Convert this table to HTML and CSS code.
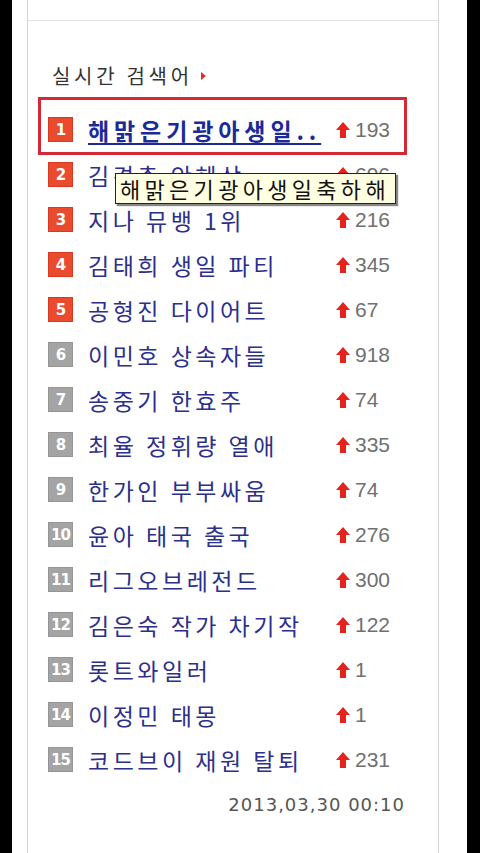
FILE: index.html
```html
<html>
  <head>
    <link rel="stylesheet" href="styles.css">
  </head>
  <body>
    <div class="screen">
      <div class="col">
        <div class="top"></div>
        <div class="rank">
          <h3 class="title">실시간 검색어</h3>
          <ol class="list">
            <li class="item first">
              <span class="hl"></span>
              <span class="num hot">1</span>
              <a class="word" href="javascript:;">해맑은기광아생일..</a>
              <span class="up"><svg viewBox="0 0 14 16" width="14" height="16"><path d="M7 0 L14 8 L10 8 L10 16 L4 16 L4 8 L0 8 Z"/></svg>193</span>
              <span class="tip">해맑은기광아생일축하해</span>
            </li>
            <li class="item"><span class="num hot">2</span><span class="word">김경춘 안혜상</span><span class="up"><svg viewBox="0 0 14 16" width="14" height="16"><path d="M7 0 L14 8 L10 8 L10 16 L4 16 L4 8 L0 8 Z"/></svg>696</span></li>
            <li class="item"><span class="num hot">3</span><span class="word">지나 뮤뱅 1위</span><span class="up"><svg viewBox="0 0 14 16" width="14" height="16"><path d="M7 0 L14 8 L10 8 L10 16 L4 16 L4 8 L0 8 Z"/></svg>216</span></li>
            <li class="item"><span class="num hot">4</span><span class="word">김태희 생일 파티</span><span class="up"><svg viewBox="0 0 14 16" width="14" height="16"><path d="M7 0 L14 8 L10 8 L10 16 L4 16 L4 8 L0 8 Z"/></svg>345</span></li>
            <li class="item"><span class="num hot">5</span><span class="word">공형진 다이어트</span><span class="up"><svg viewBox="0 0 14 16" width="14" height="16"><path d="M7 0 L14 8 L10 8 L10 16 L4 16 L4 8 L0 8 Z"/></svg>67</span></li>
            <li class="item"><span class="num">6</span><span class="word">이민호 상속자들</span><span class="up"><svg viewBox="0 0 14 16" width="14" height="16"><path d="M7 0 L14 8 L10 8 L10 16 L4 16 L4 8 L0 8 Z"/></svg>918</span></li>
            <li class="item"><span class="num">7</span><span class="word">송중기 한효주</span><span class="up"><svg viewBox="0 0 14 16" width="14" height="16"><path d="M7 0 L14 8 L10 8 L10 16 L4 16 L4 8 L0 8 Z"/></svg>74</span></li>
            <li class="item"><span class="num">8</span><span class="word">최율 정휘량 열애</span><span class="up"><svg viewBox="0 0 14 16" width="14" height="16"><path d="M7 0 L14 8 L10 8 L10 16 L4 16 L4 8 L0 8 Z"/></svg>335</span></li>
            <li class="item"><span class="num">9</span><span class="word">한가인 부부싸움</span><span class="up"><svg viewBox="0 0 14 16" width="14" height="16"><path d="M7 0 L14 8 L10 8 L10 16 L4 16 L4 8 L0 8 Z"/></svg>74</span></li>
            <li class="item"><span class="num">10</span><span class="word">윤아 태국 출국</span><span class="up"><svg viewBox="0 0 14 16" width="14" height="16"><path d="M7 0 L14 8 L10 8 L10 16 L4 16 L4 8 L0 8 Z"/></svg>276</span></li>
            <li class="item"><span class="num">11</span><span class="word">리그오브레전드</span><span class="up"><svg viewBox="0 0 14 16" width="14" height="16"><path d="M7 0 L14 8 L10 8 L10 16 L4 16 L4 8 L0 8 Z"/></svg>300</span></li>
            <li class="item"><span class="num">12</span><span class="word">김은숙 작가 차기작</span><span class="up"><svg viewBox="0 0 14 16" width="14" height="16"><path d="M7 0 L14 8 L10 8 L10 16 L4 16 L4 8 L0 8 Z"/></svg>122</span></li>
            <li class="item"><span class="num">13</span><span class="word">롯트와일러</span><span class="up"><svg viewBox="0 0 14 16" width="14" height="16"><path d="M7 0 L14 8 L10 8 L10 16 L4 16 L4 8 L0 8 Z"/></svg>1</span></li>
            <li class="item"><span class="num">14</span><span class="word">이정민 태몽</span><span class="up"><svg viewBox="0 0 14 16" width="14" height="16"><path d="M7 0 L14 8 L10 8 L10 16 L4 16 L4 8 L0 8 Z"/></svg>1</span></li>
            <li class="item"><span class="num">15</span><span class="word">코드브이 재원 탈퇴</span><span class="up"><svg viewBox="0 0 14 16" width="14" height="16"><path d="M7 0 L14 8 L10 8 L10 16 L4 16 L4 8 L0 8 Z"/></svg>231</span></li>
          </ol>
          <div class="date">2013,03,30 00:10</div>
        </div>
        <div class="next"></div>
      </div>
    </div>
  </body>
</html>
```

FILE: styles.css
```css
body {
  margin: 0;
  background: #000;
  font-family: "Noto Sans CJK KR", "Noto Sans", sans-serif;
}
.screen {
  margin-left: 12px;
  width: 455px;
  height: 853px;
  background: #fff;
  padding: 0 28px 0 15px;
  box-sizing: border-box;
  overflow: hidden;
}
.col {
  border-left: 1px solid #d4d4d4;
  border-right: 1px solid #d4d4d4;
  height: 853px;
}
.top {
  height: 20px;
  border-bottom: 1px solid #e2e2e2;
}
.rank {
  height: 818px;
  border-bottom: 1px solid #e2e2e2;
  box-sizing: content-box;
}
.next {
  height: 12px;
  border-bottom: 1px solid #cfcfcf;
}
.title {
  margin: 40px 0 0 24px;
  height: 30px;
  line-height: 30px;
  font-size: 20px;
  font-weight: normal;
  letter-spacing: 3.7px;
  color: #333;
  display: flex;
  align-items: center;
}
.title::after {
  content: "";
  margin-left: 8px;
  border-left: 5px solid #e0302a;
  border-top: 4px solid transparent;
  border-bottom: 4px solid transparent;
}
.list {
  list-style: none;
  margin: 16px 0 0 0;
  padding: 0 0 0 20px;
}
.item {
  position: relative;
  height: 45px;
  display: flex;
  align-items: center;
}
.num {
  width: 25px;
  height: 25px;
  box-sizing: border-box;
  background: #a4a4a4;
  border: 1px solid #959595;
  color: #fff;
  font-family: "DejaVu Sans", sans-serif;
  font-weight: bold;
  font-size: 15px;
  letter-spacing: -1px;
  display: flex;
  align-items: center;
  justify-content: center;
  margin-right: 15px;
  flex-shrink: 0;
}
.num.hot {
  background: #ea4a2e;
  border-color: #d63b22;
}
.word {
  width: 248px;
  font-size: 23px;
  letter-spacing: 3.5px;
  color: #2c2f8c;
  white-space: nowrap;
  line-height: 30px;
}
.first .word {
  font-weight: bold;
  color: #1b2a98;
  letter-spacing: 4.9px;
  text-decoration: underline;
  text-underline-offset: 3px;
}
.up {
  display: flex;
  align-items: center;
  font-family: "Liberation Sans", sans-serif;
  font-size: 21px;
  color: #707070;
}
.up svg {
  fill: #e3231c;
  margin-right: 5px;
}
.hl {
  position: absolute;
  left: -10px;
  top: -10px;
  width: 369px;
  height: 58px;
  box-sizing: border-box;
  border: 3px solid #d52a35;
}
.tip {
  position: absolute;
  left: 67px;
  top: 66px;
  width: 281px;
  height: 31px;
  box-sizing: border-box;
  z-index: 2;
  background: #ffffe1;
  border: 1px solid #222;
  box-shadow: 2px 2px 1px #888;
  font-size: 22px;
  letter-spacing: 4.3px;
  line-height: 28px;
  padding-left: 4px;
  color: #111;
  white-space: nowrap;
}
.date {
  margin-top: 8px;
  height: 30px;
  line-height: 30px;
  text-align: right;
  padding-right: 33px;
  font-family: "DejaVu Sans", sans-serif;
  font-size: 18px;
  letter-spacing: 1px;
  color: #555;
}
```
